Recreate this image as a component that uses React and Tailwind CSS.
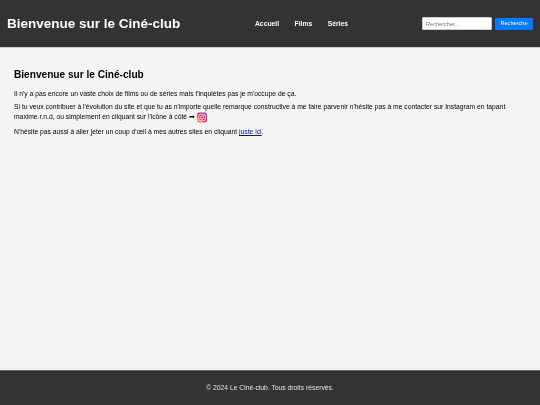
function Insta() {
  return (
    <svg viewBox="0 0 24 24" className="inline-block w-[10px] h-[11px] align-middle" aria-hidden="true">
      <defs>
        <linearGradient id="ig" x1="0" y1="1" x2="1" y2="0">
          <stop offset="0" stopColor="#fdb52b" />
          <stop offset="0.45" stopColor="#ee2a5b" />
          <stop offset="0.8" stopColor="#c0259c" />
          <stop offset="1" stopColor="#5b4fd8" />
        </linearGradient>
      </defs>
      <rect x="0" y="0" width="24" height="24" rx="6" fill="url(#ig)" />
      <rect x="4" y="4" width="16" height="16" rx="4.5" fill="none" stroke="#fff" strokeWidth="2" />
      <circle cx="12" cy="12" r="3.8" fill="none" stroke="#fff" strokeWidth="2" />
      <circle cx="16.8" cy="7.2" r="1.2" fill="#fff" />
    </svg>
  );
}

export default function App() {
  return (
    <div className="min-h-screen flex flex-col bg-[#f4f4f4] text-black font-['Liberation_Sans',Arial,sans-serif] blur-[0.3px]">
      <header className="h-[48px] shrink-0 flex items-center bg-[#333333] border-b border-[#cccccc] pl-[7px] pr-[7px]">
        <h1 className="w-[240px] text-[13.5px] leading-none font-bold text-white whitespace-nowrap">Bienvenue sur le Ciné-club</h1>
        <nav className="flex gap-[15.5px] ml-[8px] mt-[1px] text-[6.75px] font-bold text-white">
          <a>Accueil</a>
          <a>Films</a>
          <a>Séries</a>
        </nav>
        <form className="ml-auto flex items-center gap-[3px]">
          <input
            placeholder="Rechercher..."
            className="w-[70px] h-[13px] px-[3px] bg-white border border-[#cccccc] rounded-[1px] text-[5.6px] placeholder:text-[#757575] outline-none"
          />
          <button type="button" className="w-[38px] h-[12px] bg-[#007bff] rounded-[1px] text-[5.6px] text-white">Recherche</button>
        </form>
      </header>
      <main className="flex-1 px-[14px] pt-[20px]">
        <h2 className="text-[10.125px] leading-[13px] font-bold mb-[9px]">Bienvenue sur le Ciné-club</h2>
        <p className="text-[6.75px] leading-[8px] mb-[4px]">Il n'y a pas encore un vaste choix de films ou de séries mais t'inquiètes pas je m'occupe de ça.</p>
        <p className="text-[6.75px] leading-[10px] mb-[5px]">
          Si tu veux contribuer à l'évolution du site et que tu as n'importe quelle remarque constructive à me faire parvenir n'hésite pas à me contacter sur Instagram en tapant maxime.r.n.d, ou simplement en cliquant sur l'icône à côté ➡ <Insta />
        </p>
        <p className="text-[6.75px] leading-[8px]">N'hésite pas aussi à aller jeter un coup d'œil à mes autres sites en cliquant <a className="text-[#0000ee] underline">juste ici</a>.</p>
      </main>
      <footer className="h-[35px] shrink-0 flex items-center justify-center bg-[#333333] border-t border-[#666666] text-[6.75px] text-[#e4e4e4]">
        © 2024 Le Ciné-club. Tous droits réservés.
      </footer>
    </div>
  );
}
